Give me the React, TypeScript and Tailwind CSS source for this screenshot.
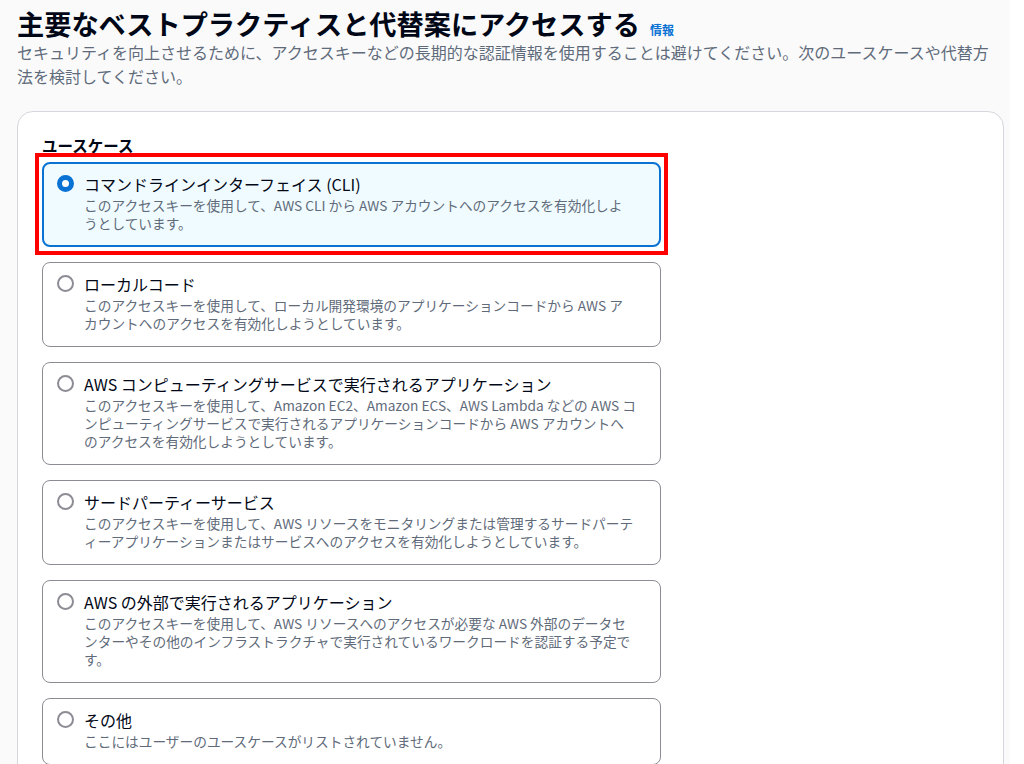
import React from 'react';

type UseCase = {
  id: string;
  title: string;
  lines: string[];
};

// description lines follow the wrapping of the original layout
const useCases: UseCase[] = [
  {
    id: 'cli',
    title: 'コマンドラインインターフェイス (CLI)',
    lines: ['このアクセスキーを使用して、AWS CLI から AWS アカウントへのアクセスを有効化しよ', 'うとしています。'],
  },
  {
    id: 'local',
    title: 'ローカルコード',
    lines: ['このアクセスキーを使用して、ローカル開発環境のアプリケーションコードから AWS ア', 'カウントへのアクセスを有効化しようとしています。'],
  },
  {
    id: 'compute',
    title: 'AWS コンピューティングサービスで実行されるアプリケーション',
    lines: [
      'このアクセスキーを使用して、Amazon EC2、Amazon ECS、AWS Lambda などの AWS コ',
      'ンピューティングサービスで実行されるアプリケーションコードから AWS アカウントへ',
      'のアクセスを有効化しようとしています。',
    ],
  },
  {
    id: 'third',
    title: 'サードパーティーサービス',
    lines: [
      'このアクセスキーを使用して、AWS リソースをモニタリングまたは管理するサードパーテ',
      'ィーアプリケーションまたはサービスへのアクセスを有効化しようとしています。',
    ],
  },
  {
    id: 'outside',
    title: 'AWS の外部で実行されるアプリケーション',
    lines: [
      'このアクセスキーを使用して、AWS リソースへのアクセスが必要な AWS 外部のデータセ',
      'ンターやその他のインフラストラクチャで実行されているワークロードを認証する予定で',
      'す。',
    ],
  },
  {
    id: 'other',
    title: 'その他',
    lines: ['ここにはユーザーのユースケースがリストされていません。'],
  },
];

function Radio({ checked }: { checked: boolean }) {
  if (checked) {
    return <span className="mt-[3px] w-[17px] h-[17px] shrink-0 rounded-full border-[5px] border-[#0972d3] bg-white" />;
  }
  return <span className="mt-[3px] w-[17px] h-[17px] shrink-0 rounded-full border-2 border-[#8c8c94] bg-white" />;
}

function Option({ u, selected }: { u: UseCase; selected: boolean }) {
  const box = selected
    ? 'flex gap-[10px] rounded-[8px] border-2 border-[#0972d3] bg-[#f0fbff] pl-[13px] pr-[10px] pt-[8px] pb-[13px]'
    : 'flex gap-[10px] rounded-[8px] border border-[#8c8c94] bg-white pl-[14px] pr-[11px] pt-[9px] pb-[14px]';
  return (
    <div className={box}>
      <Radio checked={selected} />
      <div className="min-w-0">
        <div className="text-[16px] leading-[24px]">{u.title}</div>
        <div className="text-[13.7px] leading-[18px] text-[#5f6b7a]">
          {u.lines.map((l, i) => (
            <div key={i} className="whitespace-nowrap">{l}</div>
          ))}
        </div>
      </div>
    </div>
  );
}

export default function App() {
  const selected = 'cli';

  return (
    <div className="w-[1010px] h-[764px] overflow-hidden bg-[#fafafa] pl-[17px] pr-[6px] pt-[6px] font-['Noto_Sans_CJK_JP',sans-serif] text-[#000716]">
      <div className="flex items-baseline gap-[10px]">
        <h1 className="text-[27.2px] leading-[34px] font-bold">
          主要なベストプラクティスと代替案にアクセスする
        </h1>
        <span className="text-[12px] font-bold text-[#0972d3]">情報</span>
      </div>
      <p className="text-[16px] leading-[24px] text-[#5f6b7a] pr-[4px]">
        セキュリティを向上させるために、アクセスキーなどの長期的な認証情報を使用することは避けてください。次のユースケースや代替方法を検討してください。
      </p>

      <div className="mt-[23px] bg-white border border-[#d5d7dc] rounded-[16px] pl-[24px] pt-[22px] pb-[20px]">
        <div className="text-[15.5px] leading-[22px] font-bold">ユースケース</div>
        <div className="mt-[6px] w-[619px] flex flex-col gap-[15px]">
          {useCases.map((u) =>
            u.id === selected ? (
              <div key={u.id} className="-mx-[7px] -mt-[9px] -mb-[8px] border-4 border-[#ff0000] px-[3px] pt-[5px] pb-[4px]">
                <Option u={u} selected />
              </div>
            ) : (
              <Option key={u.id} u={u} selected={false} />
            )
          )}
        </div>
      </div>
    </div>
  );
}
